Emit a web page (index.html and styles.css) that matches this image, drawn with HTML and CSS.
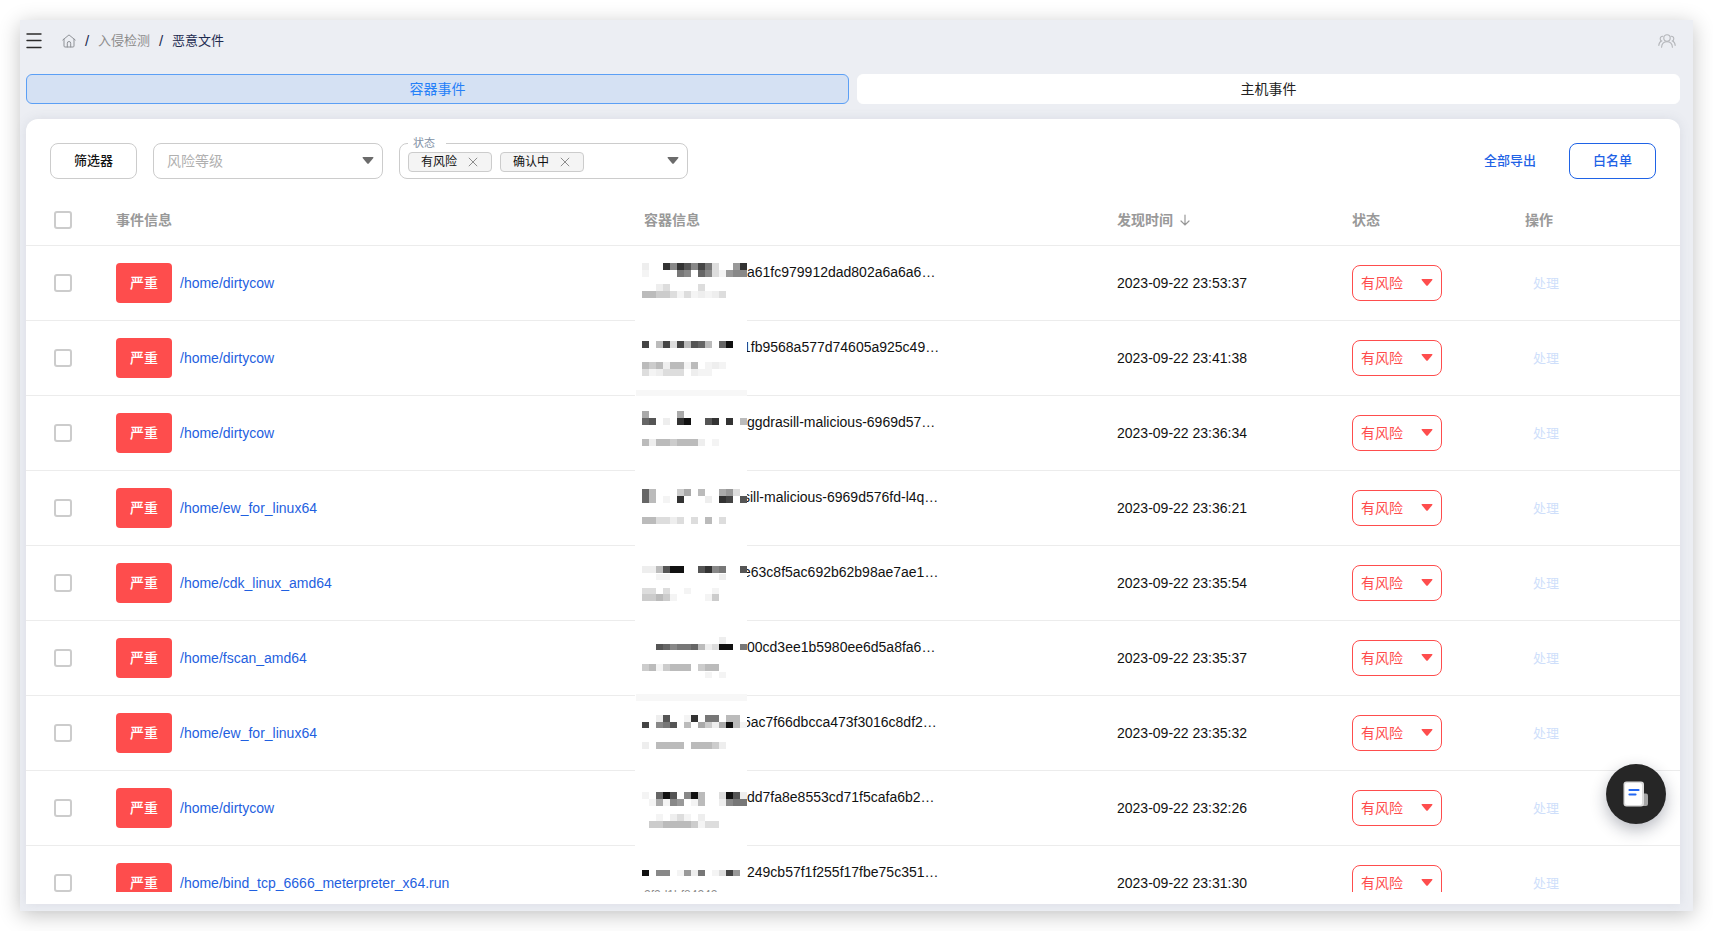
FILE: index.html
```html
<!DOCTYPE html>
<html lang="zh-CN">
<head>
<meta charset="utf-8">
<meta name="viewport" content="width=device-width, initial-scale=1">
<title>恶意文件</title>
<link rel="stylesheet" href="styles.css">
</head>
<body>
<div class="window">
  <header class="topbar">
    <button class="icon-btn menu-btn" type="button" aria-label="菜单">
      <svg width="16" height="16" viewBox="0 0 16 16" fill="none" stroke="#2b2b2b" stroke-width="1.4" stroke-linecap="round"><path d="M1 1h14M1 7.500h14M1 14.500h14"/></svg>
    </button>
    <nav class="breadcrumb" aria-label="路径">
      <a class="crumb-home" href="#" aria-label="首页">
        <svg width="14" height="14" viewBox="0 0 14 14" fill="none" stroke="#8f9297" stroke-width="1" stroke-linejoin="round" stroke-linecap="round"><path d="M.8 6 7 .9 13.200 6M2 5.200V12q0 1 1 1h8q1 0 1-1V5.200M5.300 13V9.200Q5.300 7.500 7 7.500T8.700 9.200V13"/></svg>
      </a>
      <span class="sep">/</span>
      <a class="crumb" href="#">入侵检测</a>
      <span class="sep">/</span>
      <span class="crumb-current">恶意文件</span>
    </nav>
    <button class="icon-btn users-btn" type="button" aria-label="用户">
      <svg width="18" height="14" viewBox="0 0 18 14" fill="none" stroke="#b3b5b9" stroke-width="1.100" stroke-linecap="round"><circle cx="9" cy="4" r="3.200"/><path d="M3.600 13.200C3.800 9.800 6 7.800 9 7.800s5.200 2 5.400 5.400M5 2.200C3.300 2 2.200 3.200 2.200 4.700c0 1 .5 1.900 1.300 2.300C1.800 7.800.9 9.400.8 11.400M13 2.200c1.700-.2 2.800 1 2.800 2.500 0 1-.5 1.900-1.300 2.300 1.700.8 2.600 2.400 2.700 4.400"/></svg>
    </button>
  </header>

  <div class="tabs" role="tablist">
    <button class="tab active" type="button" role="tab" aria-selected="true">容器事件</button>
    <button class="tab" type="button" role="tab" aria-selected="false">主机事件</button>
  </div>

  <main class="card">
    <div class="filters">
      <button class="btn" type="button">筛选器</button>
      <div class="select-box">
        <select class="level-select" aria-label="风险等级">
          <option>风险等级</option>
        </select>
        <svg class="caret" width="12" height="7" viewBox="0 0 12 7"><path d="M1.200 0h9.600q1.200 0 .5 1L7 6.200q-1 1-2 0L.7 1Q0 0 1.200 0z" fill="#6b6b6b"/></svg>
      </div>
      <fieldset class="status-box">
        <legend>状态</legend>
        <div class="chips">
          <span class="chip">有风险<button class="chip-x" type="button" aria-label="移除有风险"><svg width="10" height="10" viewBox="0 0 10 10" stroke="#8c8c8c" fill="none"><path d="m.8.8 8.400 8.400M9.200.8.8 9.200"/></svg></button></span>
          <span class="chip">确认中<button class="chip-x" type="button" aria-label="移除确认中"><svg width="10" height="10" viewBox="0 0 10 10" stroke="#8c8c8c" fill="none"><path d="m.8.8 8.400 8.400M9.200.8.8 9.200"/></svg></button></span>
          <button class="icon-btn open-btn" type="button" aria-label="展开状态">
            <svg width="12" height="7" viewBox="0 0 12 7"><path d="M1.200 0h9.600q1.200 0 .5 1L7 6.200q-1 1-2 0L.7 1Q0 0 1.200 0z" fill="#6b6b6b"/></svg>
          </button>
        </div>
      </fieldset>
      <div class="actions">
        <button class="text-btn" type="button">全部导出</button>
        <button class="btn primary" type="button">白名单</button>
      </div>
    </div>

    <div class="table-wrap">
      <table class="events">
        <colgroup>
          <col class="c-check"><col class="c-event"><col class="c-container"><col class="c-time"><col class="c-status"><col class="c-action">
        </colgroup>
        <thead>
          <tr>
            <th class="check-cell"><input class="check" type="checkbox" aria-label="全选"></th>
            <th>事件信息</th>
            <th>容器信息</th>
            <th><span class="sort">发现时间<svg width="10" height="12" viewBox="0 0 10 12" fill="none" stroke="#999" stroke-width="1.200" stroke-linecap="round"><path d="M5 1v10M1 7l4 4 4-4"/></svg></span></th>
            <th>状态</th>
            <th>操作</th>
          </tr>
        </thead>
        <tbody id="rows"></tbody>
      </table>
    </div>
  </main>

  <button class="fab" type="button" aria-label="文档">
    <svg width="26" height="26" viewBox="0 0 26 26"><path d="M18 12.500h5q2 0 2 2V23q0 2-2 2h-5z" fill="#a5a5a5"/><rect x=".5" y=".5" width="20.500" height="25" rx="3" fill="#dcdcdc"/><rect x="2" y="2" width="17" height="22" rx="2" fill="#fff"/><path d="M6.500 9h9M6.500 13.500h6" stroke="#2468f2" stroke-width="2.200" stroke-linecap="round"/></svg>
  </button>
</div>
<script src="script.js"></script>
</body>
</html>
```
FILE: styles.css
```css
* { box-sizing: border-box; }

body {
  margin: 0;
  padding: 20px;
  height: 100vh;
  background: #fff;
  color: #111;
  font: 14px/22px "Liberation Sans", "Noto Sans CJK SC", sans-serif;
}

button, select, input { font: inherit; color: inherit; margin: 0; }
button { cursor: pointer; }
a { text-decoration: none; }
svg { display: block; flex: none; }

.window {
  position: relative;
  display: flex;
  flex-direction: column;
  height: 100%;
  padding: 0 13px 7px 6px;
  background: #eceef3;
  box-shadow: 0 4px 20px rgba(0, 0, 0, .24);
}

.icon-btn {
  display: flex;
  align-items: center;
  padding: 0;
  border: 0;
  background: none;
}

.topbar {
  display: flex;
  align-items: center;
  height: 42px;
  margin-bottom: 12px;
}
.breadcrumb {
  display: flex;
  align-items: center;
  gap: 8px;
  margin-left: 20px;
  font-size: 13px;
}
.sep { width: 6px; font-size: 15px; color: #1d2b50; text-align: center; }
.crumb { color: #8c8c8c; }
.crumb-current { color: #1d2b50; }
.users-btn { margin-left: auto; margin-right: 4px; }

.tabs {
  display: grid;
  grid-template-columns: 1fr 1fr;
  gap: 8px;
  margin-bottom: 15px;
}
.tab {
  height: 30px;
  padding: 0;
  border: 1px solid #fff;
  border-radius: 6px;
  background: #fff;
  color: #222;
}
.tab.active { border-color: #5b9ff5; background: #d5e1f3; color: #2680f8; }

.card {
  display: flex;
  flex: 1;
  flex-direction: column;
  min-height: 0;
  padding: 24px 0 12px;
  border-radius: 12px 12px 0 0;
  background: #fff;
  box-shadow: 0 0 12px rgba(90, 100, 120, .12);
}

.filters {
  display: flex;
  align-items: center;
  gap: 16px;
  height: 36px;
  margin-bottom: 16px;
  padding: 0 24px;
}
.btn {
  width: 87px;
  height: 36px;
  padding: 0;
  border: 1px solid #ccc;
  border-radius: 8px;
  background: #fff;
  color: #111;
  font-size: 13px;
  font-weight: 500;
}
.btn.primary { border-color: #1f63e6; color: #1f63e6; }
.text-btn {
  padding: 0;
  border: 0;
  background: none;
  color: #1f63e6;
  font-size: 13px;
  font-weight: 500;
}
.actions { display: flex; align-items: center; gap: 33px; margin-left: auto; }

.select-box { position: relative; width: 230px; }
.level-select {
  display: block;
  width: 100%;
  height: 36px;
  padding: 0 13px;
  border: 1px solid #ccc;
  border-radius: 8px;
  background: #fff;
  color: #b0b0b0;
  appearance: none;
}
.caret {
  position: absolute;
  top: 14px;
  right: 9px;
  pointer-events: none;
}

.status-box {
  width: 289px;
  height: 42px;
  min-width: 0;
  margin: 0 0 6px;
  padding: 2px 8px 0;
  border: 1px solid #ccc;
  border-radius: 8px;
}
.status-box legend {
  width: 38px;
  padding: 0 5px;
  color: #8291a5;
  font-size: 11px;
  line-height: 12px;
}
.chips { display: flex; align-items: center; gap: 8px; height: 22px; }
.chip {
  display: flex;
  align-items: center;
  gap: 11px;
  height: 20px;
  padding: 0 13px 0 12px;
  border: 1px solid #ccc;
  border-radius: 4px;
  background: #f4f4f4;
  font-size: 12px;
  line-height: 18px;
}
.chip-x { padding: 0; border: 0; background: none; }
.open-btn { height: 18px; margin: 0 0 4px auto; }

.table-wrap { flex: 1; min-height: 0; overflow: hidden; }
.events {
  width: 100%;
  table-layout: fixed;
  border-collapse: separate;
  border-spacing: 0;
}
.c-check { width: 90px; }
.c-event { width: 528px; }
.c-container { width: 473px; }
.c-time { width: 235px; }
.c-status { width: 173px; }
.c-action { width: 155px; }

.events th, .events td {
  padding: 0;
  border-bottom: 1px solid #ececec;
  text-align: left;
  vertical-align: middle;
}
.events th { height: 51px; color: #999; font-weight: 700; }
.events td { height: 75px; }
.events .check-cell { padding-left: 28px; }
.check {
  display: block;
  width: 18px;
  height: 18px;
  border: 2px solid #ccc;
  border-radius: 3px;
  background: #fff;
  appearance: none;
}
.sort { display: flex; align-items: center; gap: 7px; }

.event { display: flex; align-items: center; gap: 8px; }
.tag {
  flex: none;
  width: 56px;
  border-radius: 4px;
  background: #fe4d4d;
  color: #fff;
  font-weight: 500;
  line-height: 40px;
  text-align: center;
}
.path { color: #1f5fe0; }

.events .container-cell { position: relative; }
.container-name, .container-id { display: block; white-space: nowrap; }
.container-name { padding-left: 103px; }
.container-name.wide { padding-left: 99px; }
.container-id { height: 22px; color: #8c8c8c; font-size: 12px; line-height: 24px; }
.mask { position: absolute; top: 0; left: -9px; }

.row-status { position: relative; width: 90px; }
.row-status select {
  display: block;
  width: 100%;
  height: 36px;
  padding: 0 8px;
  border: 1px solid #fe4d4d;
  border-radius: 8px;
  background: #fff;
  color: #fe4d4d;
  appearance: none;
}
.handle {
  padding: 0 8px;
  border: 0;
  background: none;
  color: #cfdffb;
  font-size: 13px;
}

.fab {
  position: absolute;
  right: 27px;
  bottom: 87px;
  display: flex;
  align-items: center;
  justify-content: center;
  width: 60px;
  height: 60px;
  padding: 0;
  border: 0;
  border-radius: 50%;
  background: #262626;
  box-shadow: 0 6px 16px rgba(20, 25, 50, .3);
}
```
FILE: script.js
```js
// Each mask line is [top, height, shades]; a shade is one hex digit, "." is blank.
const rows = [
  { path: "/home/dirtycow", name: "a61fc979912dad802a6a6a6…", time: "23:53:37",
    mask: [[17, 7, "e..3835847d..93"], [24, 7, "f....78.68df988"], [38, 7, "..ed....d......"], [45, 7, "bbccdfdfefed..."]] },
  { path: "/home/dirtycow", name: "1fb9568a577d74605a925c49…", time: "23:41:38", wide: true, bar: [69, 6],
    mask: [[20, 7, "4.b4d4b56b.61.."], [41, 7, "bcbebbfb.fef..."], [48, 7, "dfeddd.eff....."]] },
  { path: "/home/dirtycow", name: "ggdrasill-malicious-6969d57…", time: "23:36:34",
    mask: [[15, 7, "a....a........."], [22, 7, "65.e.31..53.3.b"], [43, 7, "bebbcbbbe.f...."]] },
  { path: "/home/ew_for_linux64", name: "sill-malicious-6969d576fd-l4q…", time: "23:36:21", wide: true,
    mask: [[18, 7, "6b...ca.b..a9d."], [25, 7, "6b.f.3...e.34.5"], [46, 7, "bbdded.d.b.d..."]] },
  { path: "/home/cdk_linux_amd64", name: "e63c8f5ac692b62b98ae7ae1…", time: "23:35:54", wide: true,
    mask: [[20, 7, "eeb511..5387..5"], [28, 6, "..ff.......e..."], [42, 6, "dd.d..f...f...."], [48, 7, "ccbcf....fc...."]] },
  { path: "/home/fscan_amd64", name: "00cd3ee1b5980ee6d5a8fa6…", time: "23:35:37", bar: [73, 2],
    mask: [[16, 7, "...........e..."], [23, 6, "..568776bed11.7"], [43, 7, "cbfcbbb.cbb...."], [51, 6, ".........f.f..."]] },
  { path: "/home/ew_for_linux64", name: "5ac7f66dbcca473f3016c8df2…", time: "23:35:32", wide: true, bar: [0, 5],
    mask: [[19, 7, "..e5..f3.77.bb."], [26, 6, "4.875.b.acea1bf"], [46, 7, "e.bbbb.bbbce..."]] },
  { path: "/home/dirtycow", name: "dd7fa8e8553cd71f5cafa6b2…", time: "23:32:26",
    mask: [[21, 7, "f.615.81b..d15e"], [28, 7, ".faf89.fb..e877"], [43, 7, "..f.edf.e......"], [50, 7, ".ccbbbbcfdd...."]] },
  { path: "/home/bind_tcp_6666_meterpreter_x64.run", name: "249cb57f1f255f17fbe75c351…", time: "23:31:30", id: "2f2d1bf84242", maskHeight: 36,
    mask: [[24, 6, "1.88.f9e7.fd49."]] }
];

function maskSvg(row) {
  const height = row.maskHeight || 75;
  let shapes = `<rect width="112" height="${height}" fill="#fff"/>`;
  if (row.bar) {
    shapes += `<rect x="1" y="${row.bar[0]}" width="111" height="${row.bar[1]}" fill="#f7f7f7"/>`;
  }
  for (const [y, h, shades] of row.mask) {
    [...shades].forEach((s, i) => {
      if (s !== ".") {
        const fill = s === "f" ? "#f4f4f4" : `#${s}${s}${s}`;
        shapes += `<rect x="${7 + i * 7}" y="${y}" width="7" height="${h}" fill="${fill}"/>`;
      }
    });
  }
  return `<svg class="mask" width="112" height="${height}" shape-rendering="crispEdges" aria-hidden="true">${shapes}</svg>`;
}

document.getElementById("rows").innerHTML = rows.map((row) => `
  <tr>
    <td class="check-cell"><input class="check" type="checkbox" aria-label="选择 ${row.path}"></td>
    <td><div class="event"><span class="tag">严重</span><a class="path" href="#">${row.path}</a></div></td>
    <td class="container-cell">
      <span class="container-name${row.wide ? " wide" : ""}">${row.name}</span>
      <span class="container-id">${row.id || ""}</span>
      ${maskSvg(row)}
    </td>
    <td>2023-09-22 ${row.time}</td>
    <td><div class="row-status">
      <select aria-label="状态 ${row.path}"><option>有风险</option></select>
      <svg class="caret" width="12" height="7" viewBox="0 0 12 7"><path d="M1.200 0h9.600q1.200 0 .5 1L7 6.200q-1 1-2 0L.7 1Q0 0 1.200 0z" fill="#fe4d4d"/></svg>
    </div></td>
    <td><button class="handle" type="button" disabled>处理</button></td>
  </tr>`).join("");
```
